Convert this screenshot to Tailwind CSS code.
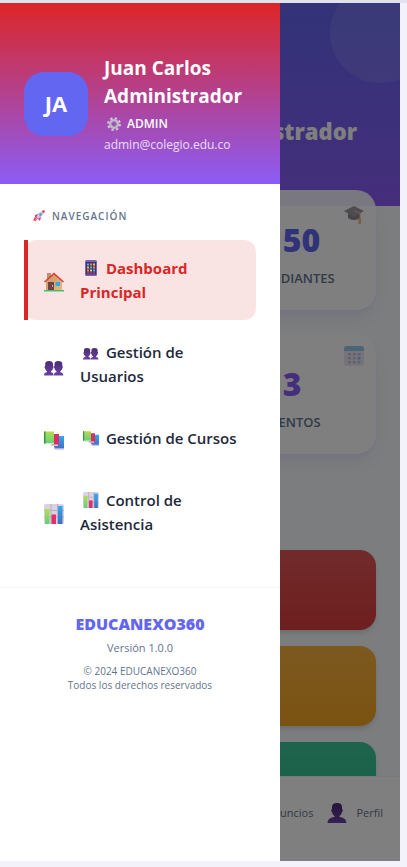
<!DOCTYPE html>
<html lang="es">
<head>
    <meta charset="UTF-8">
    <meta name="viewport" content="width=device-width, initial-scale=1.0">
    <title>EDUCANEXO360</title>
    <script src="https://cdn.jsdelivr.net/npm/@tailwindcss/browser@4"></script>
</head>
<body class="h-screen bg-[#f3f2fa] pr-[7px] pb-[6px] flex flex-col font-['Segoe_UI','Open_Sans',sans-serif] text-[#1e293b]">

    <!-- Iconos -->
    <svg class="absolute size-0" aria-hidden="true">
        <defs>
            <linearGradient id="gPurple" x1="0" y1="0" x2="0" y2="1"><stop offset="0" stop-color="#4a2d73"/><stop offset="1" stop-color="#6b3fa8"/></linearGradient>
            <linearGradient id="gGreen" x1="0" y1="0" x2="0" y2="1"><stop offset="0" stop-color="#b5dc50"/><stop offset="1" stop-color="#5fd07a"/></linearGradient>
            <linearGradient id="gBlue" x1="0" y1="0" x2="0" y2="1"><stop offset="0" stop-color="#32a9ee"/><stop offset="1" stop-color="#3c6fc4"/></linearGradient>
            <linearGradient id="gWall" x1="0" y1="0" x2="1" y2="1"><stop offset="0" stop-color="#c99468"/><stop offset="1" stop-color="#eab878"/></linearGradient>
        </defs>
        <symbol id="house" viewBox="0 0 20 20">
            <path d="M3 1h4v6H3z" fill="#c09070"/>
            <path d="M2 9l8-7 8 7v9H2z" fill="url(#gWall)"/>
            <path d="M0 9.500L10 .500l10 9-1 1L10 2.800 1 10.500z" fill="#dc4038"/>
            <path d="M4 10h6v8H4z" fill="#6d4545"/>
            <path d="M8 13h1v2H8z" fill="#d8a870"/>
            <path d="M11.500 10H16v4h-4.500z" fill="#30a8ee"/>
            <path d="M0 18h20v1.500H0z" fill="#42c070"/>
        </symbol>
        <symbol id="phone" viewBox="0 0 16 16">
            <rect x="2" width="12" height="16" rx="1.500" fill="#7766b0"/>
            <rect x="3" y="2" width="10" height="12.500" fill="#43306f"/>
            <path d="M4 3.500h2v2H4zM7 6.500h2v2H7zM10 9.500h2v2h-2z" fill="#42b8f0"/>
            <path d="M7 3.500h2v2H7zM4 9.500h2v2H4zM10 6.500h2v2h-2z" fill="#f58a3c"/>
            <path d="M10 3.500h2v2h-2zM4 6.500h2v2H4zM7 9.500h2v2H7z" fill="#f5c542"/>
            <path d="M4 12.500h2v1H4zM7 12.500h2v1H7zM10 12.500h2v1h-2z" fill="#e84878"/>
        </symbol>
        <symbol id="users" viewBox="0 0 20 20">
            <g fill="url(#gPurple)">
                <path d="M1.200 8c0-2 1.200-3 3.800-3s4 1 4 3v2c.7.300.7 1.900 0 2.200-.2 1.500-1 2.300-2 3v1c2 .3 2.500 1.300 2.500 3.300H0c0-2 .8-3 3-3.300v-1c-1-.7-1.700-1.500-1.900-3-.8-.3-.8-1.900.1-2.200z"/>
                <path d="M10.500 8c0-2 1.200-3 3.800-3s4 1 4 3v2c.7.300.7 1.900 0 2.200-.2 1.500-1 2.300-2 3v1c2 .3 3 1.300 3 3.300h-9.500c0-2 .8-3 2.700-3.300v-1c-1-.7-1.800-1.500-2-3-.8-.3-.8-1.900 0-2.200z"/>
            </g>
        </symbol>
        <symbol id="books" viewBox="0 -1 20 20">
            <path d="M11 5h9v13h-8l-2-2z" fill="url(#gBlue)"/>
            <path d="M10 17h10v1.500H11z" fill="#b8a8e8"/>
            <path d="M6 3h9v12H8z" fill="#dd2e62"/>
            <path d="M6 13.500h8v1.500H7z" fill="#e6c8e0"/>
            <path d="M0 .500h10V13H1l-1-1z" fill="url(#gGreen)"/>
            <path d="M0 .500h1.500v12H0z" fill="#3a9448"/>
            <path d="M1 12h9v1.200H2z" fill="#d8e8d8"/>
        </symbol>
        <symbol id="chart" viewBox="0 0 20 20">
            <rect width="20" height="20" rx="2" fill="#dad2e0"/>
            <path d="M0 6.500h20M0 13h20M7 0v20M13.500 0v20" stroke="#b8aec2" stroke-width="1"/>
            <rect x="1" y="5" width="4.500" height="15" fill="url(#gGreen)"/>
            <rect x="7.500" y="10.500" width="4.500" height="9.500" fill="#e0306c"/>
            <rect x="14" y="2" width="4.500" height="18" fill="url(#gBlue)"/>
        </symbol>
        <symbol id="rocket" viewBox="0 0 12 12">
            <path d="M2 5l3-1 3 3-1 4-2-2-3-2z" fill="#e0386a"/>
            <path d="M3.500 7C5 3 7 1.500 10.500 1.500 10.500 5 8.500 7.500 5 8.800z" fill="#c8c4dc"/>
            <path d="M8.500 1c1-.6 2-.8 3.300-.8 0 1.200-.2 2.200-.8 3.200z" fill="#e8384c"/>
            <circle cx="7.500" cy="4.500" r="1.200" fill="#3a9ce0"/>
            <path d="M0 10l2-3 2 2-1.500 2.500z" fill="#f03c78"/>
            <path d="M1 11l1.500-2.200L4 10z" fill="#f8a040"/>
        </symbol>
        <symbol id="gear" viewBox="0 0 14 14">
            <circle cx="7" cy="7" r="5.800" fill="none" stroke="#cfc4d8" stroke-width="2.200" stroke-dasharray="2.400 2.150"/>
            <circle cx="7" cy="7" r="3.700" fill="none" stroke="#c3b5cd" stroke-width="2.800"/>
            <circle cx="7" cy="7" r="2.300" fill="none" stroke="#93839f" stroke-width="1"/>
        </symbol>
        <symbol id="cap" viewBox="0 0 20 18">
            <path d="M4 7h12v5c-3 2.500-9 2.500-12 0z" fill="#433b4a"/>
            <path d="M10 0l10 5-10 6L0 5z" fill="#5a5462"/>
            <path d="M10 5l6 2v7" fill="none" stroke="#e8913c" stroke-width="1"/>
            <path d="M14.500 12h2.500v6h-2.500z" fill="#e8913c"/>
        </symbol>
        <symbol id="calendar" viewBox="0 0 20 20">
            <rect width="20" height="20" rx="3" fill="#e3d8ee"/>
            <path d="M3 0h14a3 3 0 0 1 3 3v2H0V3a3 3 0 0 1 3-3z" fill="#4aa8e0"/>
            <path d="M4 7h3v2.500H4zM8.800 7h3v2.500h-3zM13.500 7h3v2.500h-3zM4 11h3v2.500H4zM8.800 11h3v2.500h-3zM4 15h3v2.500H4zM8.800 15h3v2.500h-3zM13.500 15h3v2.500h-3z" fill="#a89cb8"/>
            <path d="M13.500 11h3v2.500h-3z" fill="#2f9be8"/>
        </symbol>
        <symbol id="user" viewBox="0 0 20 20">
            <path d="M5 4c0-2.500 1.500-4 5-4s5 1.500 5 4v2c1 .2 1 2.800 0 3-.3 2-1.300 3-2.500 4v1c3.500.5 6.500 1.500 7 6H.500c.5-4.500 3.500-5.500 7-6v-1C6.300 12 5.300 11 5 9 4 8.800 4 6.200 5 6z" fill="url(#gPurple)"/>
        </symbol>
    </svg>

    <div class="h-[3px] shrink-0 bg-[#e2e1ee] -mr-[7px]"></div>

    <div class="relative flex-1 min-h-0 overflow-hidden flex flex-col bg-[#f8fafc]">

        <!-- Dashboard -->
        <main class="flex-1 min-h-0 overflow-hidden">
            <header class="relative h-[203px] overflow-hidden bg-linear-to-b/srgb from-[#6366f1] to-[#8b5cf6] pt-28 pr-[43px]">
                <div class="absolute -top-5 -right-[30px] size-[100px] rounded-full bg-white/10"></div>
                <h1 class="text-right text-[22px] leading-8 font-extrabold text-white">Administrador</h1>
            </header>

            <section class="relative -mt-4 px-6 grid grid-cols-2 gap-x-4 gap-y-6">
                <article class="relative col-start-2 h-[120px] rounded-[20px] bg-white/90 pt-8 text-center shadow-lg shadow-[#6366f1]/10">
                    <svg class="absolute top-4 right-3 w-5 h-[18px] opacity-60"><use href="#cap"/></svg>
                    <p class="text-[32px] leading-9 font-extrabold text-[#6366f1]">150</p>
                    <p class="mt-2 text-[13px] leading-6 font-semibold text-[#64748b]">ESTUDIANTES</p>
                </article>
                <article class="relative col-start-2 h-[120px] rounded-[20px] bg-white pt-8 text-center shadow-lg shadow-[#6366f1]/10">
                    <svg class="absolute top-3 right-3 size-5 opacity-60"><use href="#calendar"/></svg>
                    <p class="text-[32px] leading-9 font-extrabold text-[#8b5cf6]">3</p>
                    <p class="mt-2 text-[13px] leading-6 font-semibold text-[#64748b]">EVENTOS</p>
                </article>
            </section>

            <section class="mt-24 px-6 flex flex-col gap-4">
                <div class="h-20 rounded-2xl bg-linear-to-b/srgb from-[#e45656] to-[#dc3e3e] shadow-md"></div>
                <div class="h-20 rounded-2xl bg-linear-to-b/srgb from-[#fab240] to-[#f5a623] shadow-md"></div>
                <div class="h-20 rounded-2xl bg-linear-to-b/srgb from-[#3ec799] to-[#2fc08c] shadow-md"></div>
            </section>
        </main>

        <nav class="relative h-[85px] shrink-0 border-t border-[#f1f5f9] bg-white pb-3 pr-[17px] flex items-center justify-end text-[11px] text-[#64748b]">
            <a href="#" class="mr-[14px]">Anuncios</a>
            <a href="#" class="flex items-center gap-[9px]"><svg class="size-5"><use href="#user"/></svg>Perfil</a>
        </nav>

        <div class="absolute inset-0 bg-black/50"></div>

        <!-- Menu lateral -->
        <aside class="absolute inset-y-0 left-0 w-[280px] bg-white overflow-y-auto">
            <div class="bg-linear-to-b/srgb from-[#dc2626] to-[#8b5cf6] px-6 pt-[51px] pb-[31px] flex items-center gap-4 text-white">
                <div class="size-16 shrink-0 rounded-[20px] bg-[#6366f1] flex items-center justify-center text-[22px] font-bold">JA</div>
                <div>
                    <h2 class="text-[19px] leading-7 font-bold">Juan Carlos Administrador</h2>
                    <p class="flex items-center gap-[6px] pl-[3px] text-xs leading-[27px] font-semibold"><svg class="size-[14px]"><use href="#gear"/></svg>ADMIN</p>
                    <p class="text-xs leading-4 text-white/80">admin@colegio.edu.co</p>
                </div>
            </div>

            <nav class="px-6 pt-6 pb-[35px]">
                <h3 class="flex items-center gap-[7px] pl-[9px] mb-4 text-[10px] leading-4 font-semibold tracking-[1px] text-[#64748b]"><svg class="size-3"><use href="#rocket"/></svg>NAVEGACIÓN</h3>
                <ul class="space-y-1 text-[15px] leading-6 font-semibold">
                    <li>
                        <a href="#" class="relative flex items-center gap-4 min-h-[60px] py-4 pl-5 pr-4 rounded-xl bg-[#f9e4e3] font-bold text-[#dc2626]">
                            <span class="absolute inset-y-0 left-0 w-1 bg-[#dc2626]"></span>
                            <svg class="size-5 shrink-0 mt-1"><use href="#house"/></svg>
                            <span><svg class="inline align-[-2px] size-4 mx-[3px]"><use href="#phone"/></svg> Dashboard Principal</span>
                        </a>
                    </li>
                    <li>
                        <a href="#" class="flex items-center gap-4 min-h-[60px] py-4 pl-5 pr-4 rounded-xl">
                            <svg class="size-5 shrink-0 mt-1"><use href="#users"/></svg>
                            <span><svg class="inline align-[-2px] size-4 mx-[3px]"><use href="#users"/></svg> Gestión de<br>Usuarios</span>
                        </a>
                    </li>
                    <li>
                        <a href="#" class="flex items-center gap-4 min-h-[60px] py-4 pl-5 pr-4 rounded-xl">
                            <svg class="size-5 shrink-0 mt-1"><use href="#books"/></svg>
                            <span><svg class="inline align-[-2px] size-4 mx-[3px]"><use href="#books"/></svg> Gestión de Cursos</span>
                        </a>
                    </li>
                    <li>
                        <a href="#" class="flex items-center gap-4 min-h-[60px] py-4 pl-5 pr-4 rounded-xl">
                            <svg class="size-5 shrink-0 mt-1"><use href="#chart"/></svg>
                            <span><svg class="inline align-[-2px] size-4 mx-[3px]"><use href="#chart"/></svg> Control de<br>Asistencia</span>
                        </a>
                    </li>
                </ul>
            </nav>

            <footer class="border-t border-[#f1f5f9] p-6 text-center text-[#64748b]">
                <p class="text-base leading-6 font-extrabold text-[#6366f1]">EDUCANEXO360</p>
                <p class="text-[11px] leading-6">Versión 1.0.0</p>
                <p class="mt-1 text-[10px] leading-[14px]">© 2024 EDUCANEXO360<br>Todos los derechos reservados</p>
            </footer>
        </aside>
    </div>
</body>
</html>
